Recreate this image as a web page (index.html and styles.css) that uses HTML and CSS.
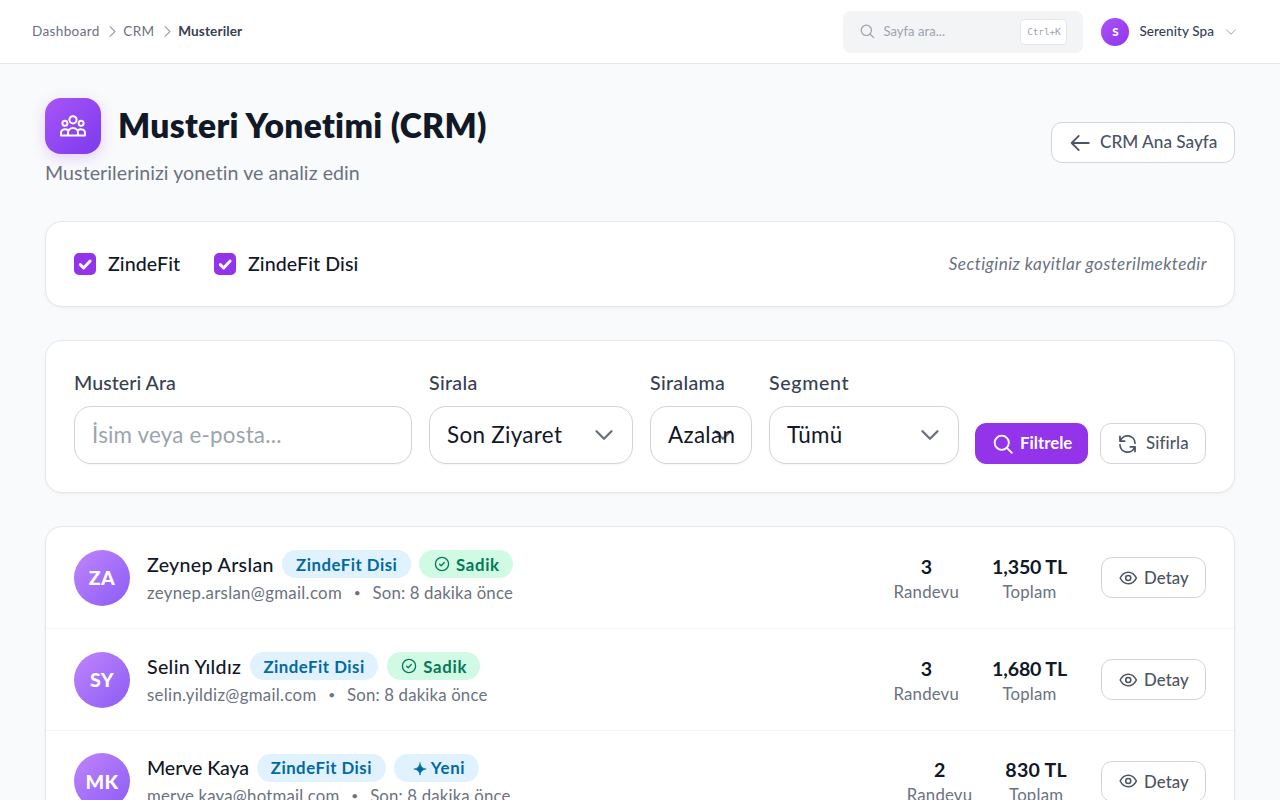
FILE: index.html
```html
<!DOCTYPE html>
<html lang="tr">
<head>
<meta charset="utf-8">
<title>Musteriler</title>
<link rel="stylesheet" href="styles.css">
</head>
<body>
<svg class="sprite" width="0" height="0">
  <symbol id="chev-r" viewBox="0 0 24 24"><path d="m7.500 3 9 9-9 9"/></symbol>
  <symbol id="chev-d" viewBox="0 0 24 24"><path d="m3 7.500 9 9 9-9"/></symbol>
  <symbol id="search" viewBox="0 0 24 24"><circle cx="10.500" cy="10.500" r="8.500"/><path d="m16.600 16.600 6 6"/></symbol>
  <symbol id="arrow" viewBox="0 0 24 24"><path d="M22.500 12H2m8.500-8.500L2 12l8.500 8.500"/></symbol>
  <symbol id="users" viewBox="0 0 26 22"><circle cx="13" cy="4.800" r="3.600"/><circle cx="4.900" cy="8.200" r="2.500"/><circle cx="21.100" cy="8.200" r="2.500"/><path d="M8 20.400v-2.400a5 5 0 0 1 10 0v2.400M8 15c-3.600-1.600-7-.4-7 3v2.400h24V18c0-3.400-3.400-4.600-7-3"/></symbol>
  <symbol id="check" viewBox="0 0 16 16"><path d="m4.500 8.300 2.400 2.400 4.600-4.900"/></symbol>
  <symbol id="refresh" viewBox="0 0 24 24"><path d="M2.500 2.500v6h6M3 8.200A9.500 9.500 0 0 1 21.500 11M21.500 21.500v-6h-6M21 15.800A9.500 9.500 0 0 1 2.500 13"/></symbol>
  <symbol id="eye" viewBox="0 0 24 24"><path d="M1.500 12C4 7 7.500 4.500 12 4.500S20 7 22.500 12C20 17 16.500 19.500 12 19.500S4 17 1.500 12Z"/><circle cx="12" cy="12" r="3.300"/></symbol>
  <symbol id="seal" viewBox="0 0 16 16"><circle cx="8" cy="8" r="6.600"/><path d="m5.600 8.300 1.600 1.500 3.100-3.300"/></symbol>
  <symbol id="spark" viewBox="0 0 16 16"><path d="M8 1q.8 6.200 7 7-6.200.8-7 7-.8-6.200-7-7 6.200-.8 7-7Z"/></symbol>
</svg>

<header class="topbar">
  <nav class="crumbs">
    <span>Dashboard</span><svg class="ico"><use href="#chev-r"/></svg><span>CRM</span><svg class="ico"><use href="#chev-r"/></svg><b>Musteriler</b>
  </nav>
  <div class="quick"><svg class="ico"><use href="#search"/></svg><span>Sayfa ara...</span><kbd>Ctrl+K</kbd></div>
  <div class="account"><i class="dot">S</i><span>Serenity Spa</span><svg class="ico"><use href="#chev-d"/></svg></div>
</header>

<main>
  <section class="head">
    <div>
      <div class="title-row"><div class="tile"><svg class="ico"><use href="#users"/></svg></div><h1>Musteri Yonetimi (CRM)</h1></div>
      <p class="sub">Musterilerinizi yonetin ve analiz edin</p>
    </div>
    <a class="btn back"><svg class="ico"><use href="#arrow"/></svg><span>CRM Ana Sayfa</span></a>
  </section>

  <section class="card kinds">
    <label class="kind first"><i class="box"><svg class="ico"><use href="#check"/></svg></i><span>ZindeFit</span></label>
    <label class="kind"><i class="box"><svg class="ico"><use href="#check"/></svg></i><span>ZindeFit Disi</span></label>
    <em class="note">Sectiginiz kayitlar gosterilmektedir</em>
  </section>

  <section class="card filters">
    <div class="field f-search"><span class="lbl">Musteri Ara</span><div class="control ph"><span>İsim veya e-posta...</span></div></div>
    <div class="field f-sort"><span class="lbl">Sirala</span><div class="control"><svg class="ico"><use href="#chev-d"/></svg><span>Son Ziyaret</span></div></div>
    <div class="field f-dir"><span class="lbl">Siralama</span><div class="control"><svg class="ico"><use href="#chev-d"/></svg><span>Azalan</span></div></div>
    <div class="field f-seg"><span class="lbl">Segment</span><div class="control"><svg class="ico"><use href="#chev-d"/></svg><span>Tümü</span></div></div>
    <a class="btn primary"><svg class="ico"><use href="#search"/></svg><span>Filtrele</span></a>
    <a class="btn reset"><svg class="ico"><use href="#refresh"/></svg><span>Sifirla</span></a>
  </section>

  <section class="card list">
    <article class="row">
      <div class="avatar">ZA</div>
      <div class="who">
        <div class="line"><span class="name">Zeynep Arslan</span><span class="badge blue">ZindeFit Disi</span><span class="badge green"><svg class="ico"><use href="#seal"/></svg>Sadik</span></div>
        <div class="meta"><span>zeynep.arslan@gmail.com</span><i>•</i><span class="last">Son: 8 dakika önce</span></div>
      </div>
      <div class="stat visits"><b>3</b><span>Randevu</span></div>
      <div class="stat"><b>1,350 TL</b><span>Toplam</span></div>
      <a class="btn detail"><svg class="ico"><use href="#eye"/></svg><span>Detay</span></a>
    </article>
    <article class="row">
      <div class="avatar">SY</div>
      <div class="who">
        <div class="line"><span class="name">Selin Yıldız</span><span class="badge blue">ZindeFit Disi</span><span class="badge green"><svg class="ico"><use href="#seal"/></svg>Sadik</span></div>
        <div class="meta"><span>selin.yildiz@gmail.com</span><i>•</i><span class="last">Son: 8 dakika önce</span></div>
      </div>
      <div class="stat visits"><b>3</b><span>Randevu</span></div>
      <div class="stat"><b>1,680 TL</b><span>Toplam</span></div>
      <a class="btn detail"><svg class="ico"><use href="#eye"/></svg><span>Detay</span></a>
    </article>
    <article class="row">
      <div class="avatar">MK</div>
      <div class="who">
        <div class="line"><span class="name snug">Merve Kaya</span><span class="badge blue">ZindeFit Disi</span><span class="badge blue new"><svg class="ico"><use href="#spark"/></svg>Yeni</span></div>
        <div class="meta snug"><span>merve.kaya@hotmail.com</span><i>•</i><span class="last">Son: 8 dakika önce</span></div>
      </div>
      <div class="stat visits"><b>2</b><span>Randevu</span></div>
      <div class="stat short"><b>830 TL</b><span>Toplam</span></div>
      <a class="btn detail"><svg class="ico"><use href="#eye"/></svg><span>Detay</span></a>
    </article>
  </section>
</main>
</body>
</html>
```

FILE: styles.css
```css
* { box-sizing: border-box; }
html, body { height: 100%; }
body {
  margin: 0;
  overflow: hidden;
  background: #f9fafb;
  color: #111827;
  font-family: Lato, "Open Sans", sans-serif;
  letter-spacing: .02em;
  white-space: nowrap;
}
.sprite { position: absolute; }
.ico { fill: none; stroke: currentColor; stroke-width: 2; stroke-linecap: round; stroke-linejoin: round; flex: none; }
i { font-style: normal; }

.topbar { display: flex; align-items: center; height: 64px; padding: 0 43px 0 32px; background: #fff; border-bottom: 1px solid #e5e7eb; }
.topbar span, .crumbs b { padding-bottom: 1.500px; }
.crumbs { display: flex; align-items: center; gap: 6px; font-size: 13.600px; color: #6b7280; flex: 1; }
.crumbs .ico { width: 13px; height: 13px; margin-right: -1.300px; color: #9ca3af; stroke-width: 2.200; }
.crumbs b { color: #374151; font-weight: 700; letter-spacing: .12px; }
.quick { display: flex; align-items: center; width: 240px; height: 42px; padding: 0 16px 0 17px; border-radius: 8px; background: #f3f4f6; color: #9ca3af; font-size: 13px; letter-spacing: .05px; }
.quick .ico { width: 14.500px; height: 14.500px; margin-right: 8.500px; }
.quick span { flex: 1; }
.quick kbd { display: flex; align-items: center; justify-content: center; width: 47px; height: 26px; border: 1px solid #e5e7eb; border-radius: 4px; background: #fff; font: 9.500px "DejaVu Sans Mono", monospace; letter-spacing: -.2px; }
.account { display: flex; align-items: center; margin-left: 18px; color: #374151; font-size: 13.500px; font-weight: 500; letter-spacing: .08px; }
.dot { display: flex; align-items: center; justify-content: center; width: 28px; height: 28px; margin-right: 10px; border-radius: 50%; background: linear-gradient(135deg, #a855f7, #9333ea); color: #fff; font-size: 11.500px; font-weight: 900; }
.account .ico { width: 12px; height: 12px; margin-left: 11px; color: #9ca3af; }

main { padding: 34px 45px 0; }
.head { display: flex; justify-content: space-between; align-items: center; height: 89px; margin-bottom: 34px; }
.title-row { display: flex; align-items: center; gap: 17px; }
.tile { display: flex; align-items: center; justify-content: center; width: 56px; height: 56px; border-radius: 16px; background: linear-gradient(135deg, #a855f7, #7c3aed); color: #fff; box-shadow: 0 4px 14px rgba(168, 85, 247, .25); }
.tile .ico { width: 26px; height: 22px; }
h1 { margin: 0; padding-bottom: 2px; font-size: 33.600px; line-height: 40px; font-weight: 800; letter-spacing: .32px; }
.sub { margin: 5px 0 0; font-size: 19.600px; line-height: 28px; letter-spacing: .07px; color: #6b7280; }

.btn { display: inline-flex; align-items: center; height: 41px; border: 1px solid #d1d5db; border-radius: 11px; background: #fff; color: #4b5563; font-size: 16.800px; font-weight: 500; letter-spacing: .1px; }
.btn .ico { width: 20px; height: 20px; stroke-width: 2.200; }
.back { width: 184px; padding-left: 18px; gap: 10px; font-size: 17.200px; letter-spacing: 0; }
.back span, .filters .btn span { padding-bottom: 1.500px; }

.card { background: #fff; border: 1px solid #e5e7eb; border-radius: 17px; box-shadow: 0 1px 3px rgba(0, 0, 0, .05); }
.kinds { display: flex; align-items: center; height: 86px; padding: 0 27px 0 28px; font-size: 19.600px; font-weight: 500; }
.kind { display: flex; align-items: center; gap: 11.500px; letter-spacing: .1px; }
.kind span { padding-bottom: 2px; }
.kind.first { width: 140px; }
.box { display: flex; width: 22.400px; height: 22.400px; border-radius: 5px; background: #9333ea; color: #fff; }
.box .ico { width: 22.400px; height: 22.400px; stroke-width: 2.100; }
.note { margin-left: auto; padding-bottom: 1px; font-size: 17.200px; font-weight: 400; letter-spacing: .42px; color: #6b7280; }

.filters { display: flex; align-items: flex-end; height: 153px; margin-top: 33px; padding: 0 28px 28px; }
.field { margin-right: 17px; }
.f-search { width: 338px; }
.f-search .lbl { letter-spacing: .05px; }
.f-sort { width: 204px; }
.f-dir { width: 102px; }
.f-seg { width: 190px; margin-right: 16px; }
.f-seg .lbl { letter-spacing: .65px; }
.lbl { display: block; margin-bottom: 9px; font-size: 19.600px; line-height: 28px; font-weight: 500; color: #374151; }
.control { position: relative; display: flex; align-items: center; height: 58px; padding: 0 17px; border: 1px solid #d1d5db; border-radius: 17px; background: #fff; font-size: 22.400px; box-shadow: 0 1px 2px rgba(0, 0, 0, .04); }
.control span { position: relative; padding-bottom: 2px; }
.control .ico { position: absolute; right: 18px; top: 18px; width: 20px; height: 20px; color: #6b7280; stroke-width: 2.800; }
.ph { color: #9ca3af; letter-spacing: .2px; }
.primary { width: 113px; padding-left: 17px; gap: 7px; border-color: #9333ea; background: #9333ea; color: #fff; font-weight: 700; letter-spacing: 0; }
.reset { width: 106px; padding-left: 17px; gap: 9px; margin-left: 12px; letter-spacing: .15px; }
.reset .ico { width: 19px; }

.list { margin-top: 33px; }
.row { display: flex; align-items: center; height: 101.800px; padding: 1px 28px 0; border-bottom: 1px solid #f3f4f6; }
.avatar { display: flex; align-items: center; justify-content: center; width: 56px; height: 56px; margin-right: 17px; border-radius: 50%; background: linear-gradient(135deg, #c084fc, #8b5cf6); color: #fff; font-size: 19.600px; font-weight: 900; }
.who { flex: 1; padding-top: 1px; }
.line { display: flex; align-items: center; height: 28px; }
.name { margin-right: 8.500px; font-size: 19.600px; font-weight: 500; }
.name.snug { margin-right: 8px; letter-spacing: -.1px; }
.badge { display: flex; align-items: center; height: 28px; margin-right: 8.400px; padding: 0 13.700px; border-radius: 14px; font-size: 16.800px; font-weight: 700; letter-spacing: .03em; }
.badge .ico { width: 16px; height: 16px; margin-right: 6px; stroke-width: 1.300; }
.blue { background: #e0f2fe; color: #0369a1; }
.green { padding-left: 14.500px; padding-right: 13px; background: #d1fae5; color: #047857; letter-spacing: .7px; }
.badge.new .ico { margin: 2px 4px 0 5px; width: 14px; height: 14px; stroke-width: .6; fill: currentColor; }
.new { letter-spacing: .7px; }
.meta { display: flex; height: 28px; align-items: center; font-size: 16.800px; color: #6b7280; }
.meta.snug { letter-spacing: .23px; }
.meta i { width: 30.500px; text-align: center; font-size: 12px; }
.last { letter-spacing: .16px; }
.stat { display: flex; flex-direction: column; align-items: center; margin-right: 34px; padding-top: 2px; font-size: 16.800px; line-height: 25px; color: #6b7280; }
.visits { margin-right: 33px; }
.stat span { letter-spacing: .2px; }
.stat b { font-size: 19.600px; line-height: 25px; font-weight: 700; letter-spacing: -.15px; color: #111827; }
.stat.short b { letter-spacing: .25px; }
.detail { width: 105px; padding-left: 16.500px; gap: 7px; }
.detail .ico { width: 18.500px; stroke-width: 2; }
```
